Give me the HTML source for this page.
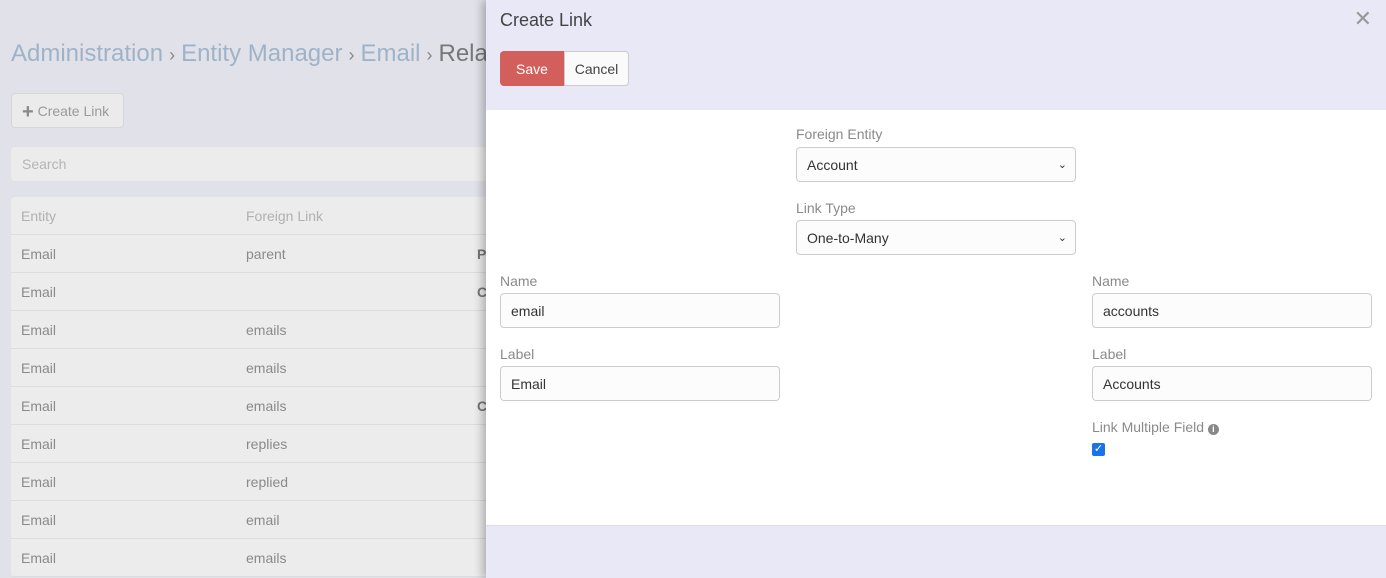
<!DOCTYPE html>
<html><head><style>
*{box-sizing:border-box;margin:0;padding:0}
body{width:1386px;height:578px;overflow:hidden;background:#e1e1e9;font-family:"Liberation Sans",sans-serif;position:relative}
.bc{position:absolute;left:11px;top:40px;font-size:24px;color:#9fb3c8;white-space:nowrap}
.bc .s{color:#888;font-size:18px;margin:0 6px}
.bc .d{color:#777}
.cl{position:absolute;left:11px;top:93px;width:113px;height:35px;border:1px solid #d6d6d6;border-radius:4px;background:#ebebeb;color:#9a9a9a;font-size:14px;line-height:34px;padding-left:10px}
.cl b{font-size:20px;color:#888;font-weight:bold;vertical-align:-2px}
.search{position:absolute;left:11px;top:147px;width:480px;height:34px;background:#ececec;border-radius:4px;color:#b5b5b5;font-size:14px;line-height:34px;padding-left:11px}
.tbl{position:absolute;left:11px;top:197px;width:480px;background:#ececec;border-radius:4px}
.r{height:38px;border-bottom:1px solid #dcdcdc;font-size:14px;color:#8a8a8a;line-height:39px;position:relative}
.r span{position:absolute}
.r .a{left:10px}.r .b{left:235px}.r .c{left:466px;font-weight:bold;color:#777}
.hd{color:#b0b0b0}
.modal{position:absolute;left:486px;top:0;width:900px;height:578px;background:#e8e8f6;box-shadow:-4px 0 8px rgba(0,0,0,.25)}
.title{position:absolute;left:14px;top:10px;font-size:18px;color:#444}
.x{position:absolute;right:14px;top:6px;font-size:22px;color:#999}
.save{position:absolute;left:14px;top:51px;width:64px;height:35px;background:#d25f5c;color:#fff;font-size:14px;line-height:36px;text-align:center;border-radius:4px 0 0 4px}
.cancel{position:absolute;left:78px;top:51px;width:65px;height:35px;background:#fafafa;border:1px solid #ccc;color:#444;font-size:14px;line-height:34px;text-align:center;border-radius:0 4px 4px 0}
.body{position:absolute;left:0;top:110px;width:900px;height:416px;background:#fff;border-bottom:1px solid #ddd}
.lab{position:absolute;font-size:14px;color:#8a8a8a}
.in{position:absolute;height:35px;border:1px solid #ccc;border-radius:4px;background:#fcfcfc;font-size:14px;color:#333;line-height:34px;padding-left:10px}
.in i{position:absolute;right:8px;top:0;font-style:normal;font-size:11px;color:#333}
.cb{position:absolute;left:606px;top:333px;width:13px;height:13px;background:#1a73e8;border-radius:2px;color:#fff;font-size:11px;line-height:13px;text-align:center}
</style></head><body>
<div class="bc">Administration<span class="s">›</span>Entity Manager<span class="s">›</span>Email<span class="s">›</span><span class="d">Relationships</span></div>
<div class="cl"><b>+</b> Create Link</div>
<div class="search">Search</div>
<div class="tbl">
<div class="r hd"><span class="a">Entity</span><span class="b">Foreign Link</span></div>
<div class="r"><span class="a">Email</span><span class="b">parent</span><span class="c">P</span></div>
<div class="r"><span class="a">Email</span><span class="c">C</span></div>
<div class="r"><span class="a">Email</span><span class="b">emails</span></div>
<div class="r"><span class="a">Email</span><span class="b">emails</span></div>
<div class="r"><span class="a">Email</span><span class="b">emails</span><span class="c">C</span></div>
<div class="r"><span class="a">Email</span><span class="b">replies</span></div>
<div class="r"><span class="a">Email</span><span class="b">replied</span></div>
<div class="r"><span class="a">Email</span><span class="b">email</span></div>
<div class="r"><span class="a">Email</span><span class="b">emails</span></div>
</div>
<div class="modal">
<div class="title">Create Link</div>
<div class="x">✕</div>
<div class="save">Save</div>
<div class="cancel">Cancel</div>
<div class="body">
<div class="lab" style="left:310px;top:16px">Foreign Entity</div>
<div class="in" style="left:310px;top:37px;width:280px">Account<i>⌄</i></div>
<div class="lab" style="left:310px;top:90px">Link Type</div>
<div class="in" style="left:310px;top:110px;width:280px">One-to-Many<i>⌄</i></div>
<div class="lab" style="left:14px;top:163px">Name</div>
<div class="in" style="left:14px;top:183px;width:280px">email</div>
<div class="lab" style="left:14px;top:236px">Label</div>
<div class="in" style="left:14px;top:256px;width:280px">Email</div>
<div class="lab" style="left:606px;top:163px">Name</div>
<div class="in" style="left:606px;top:183px;width:280px">accounts</div>
<div class="lab" style="left:606px;top:236px">Label</div>
<div class="in" style="left:606px;top:256px;width:280px">Accounts</div>
<div class="lab" style="left:606px;top:309px">Link Multiple Field <span style="display:inline-block;width:11px;height:11px;border-radius:50%;background:#888;color:#fff;font-size:9px;line-height:11px;text-align:center;font-weight:bold">i</span></div>
<div class="cb">✓</div>
</div>
</div>
</body></html>
